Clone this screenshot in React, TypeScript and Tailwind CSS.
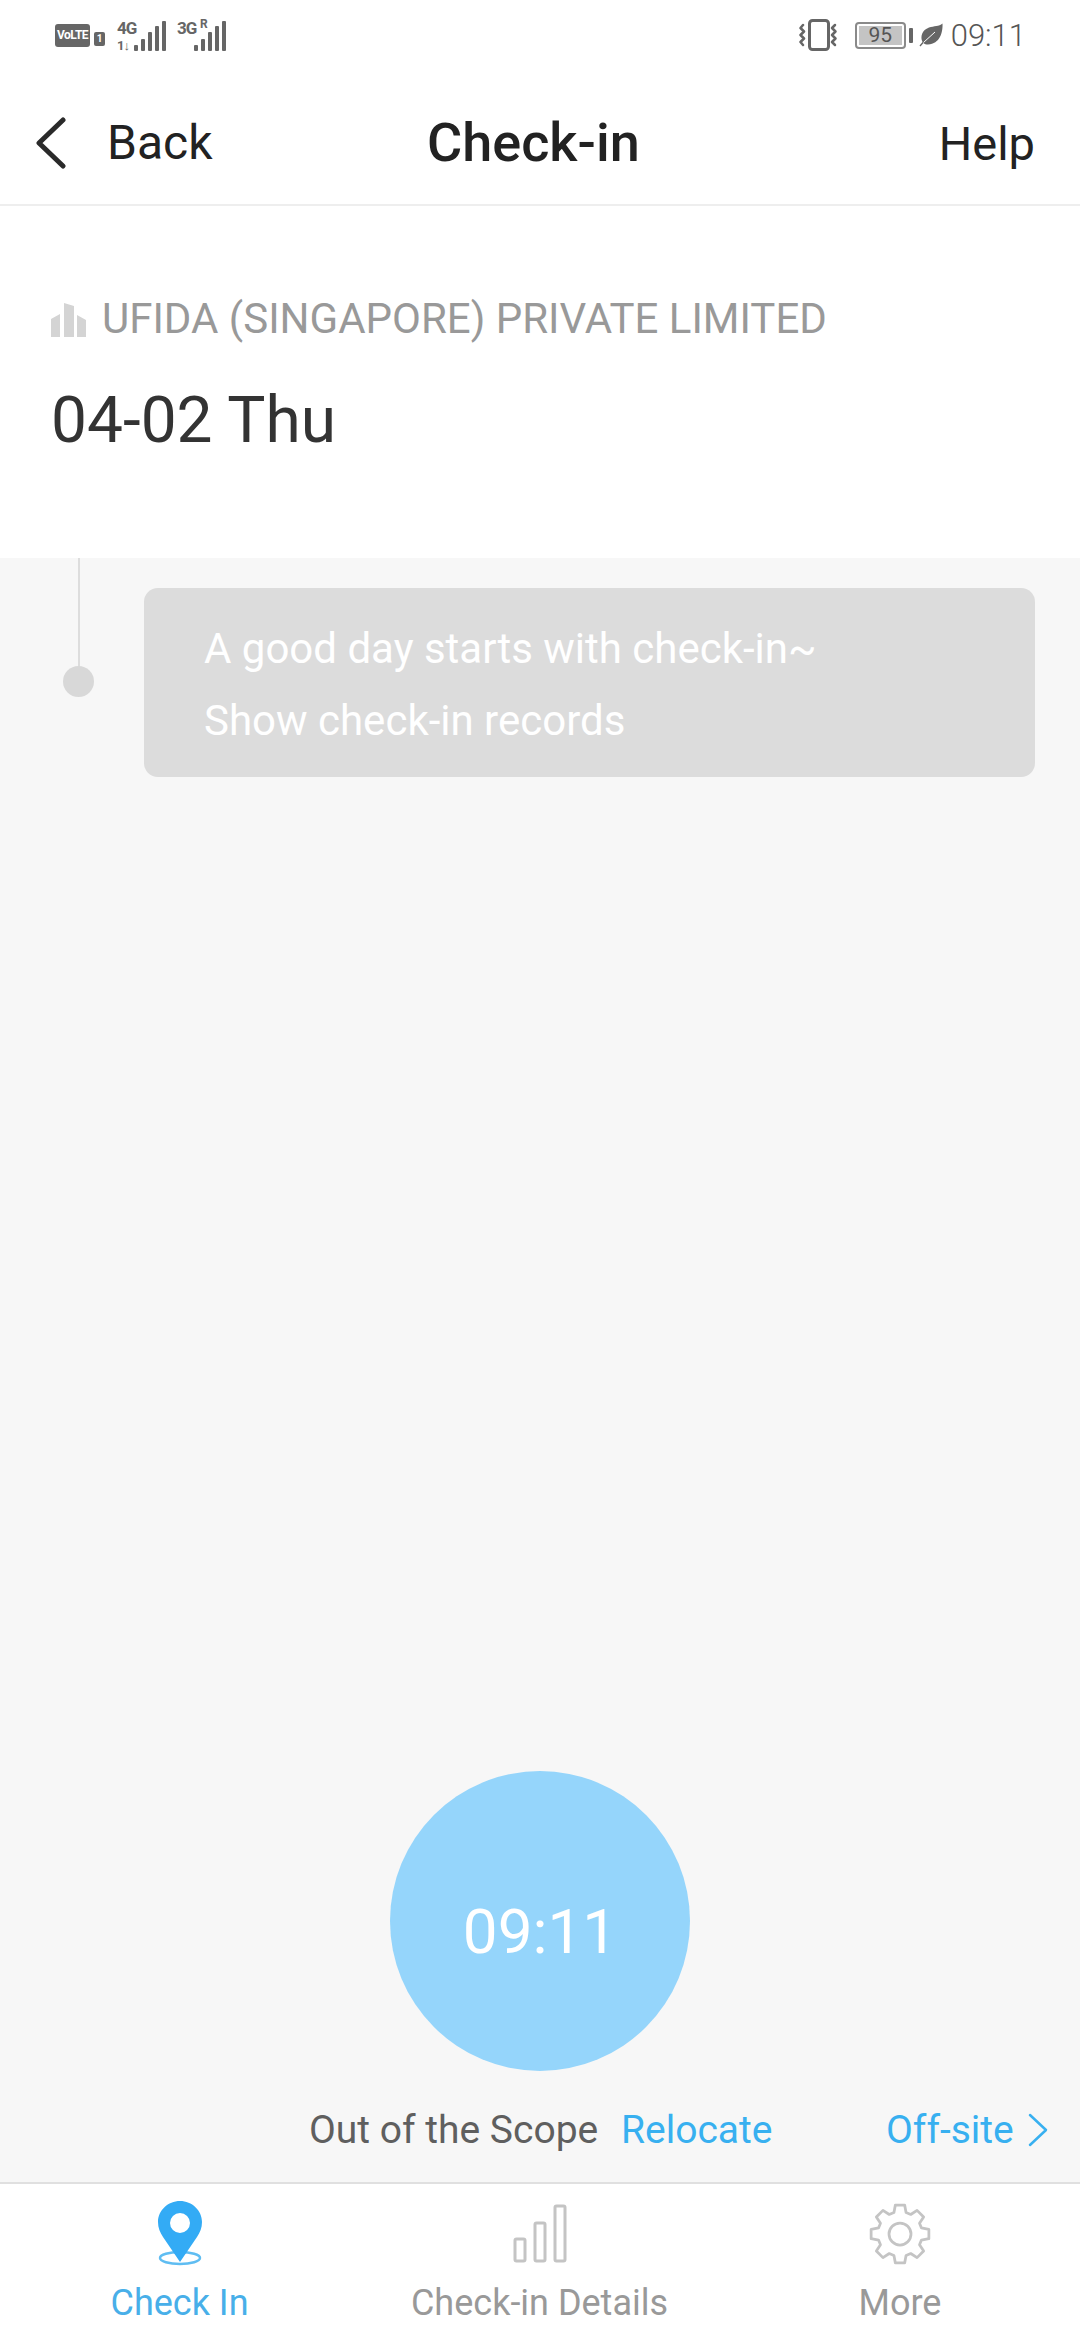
const font = "font-['Roboto',sans-serif]";

function SignalBars({ bars }: { bars: number[] }) {
  return (
    <div className="flex items-end gap-[3px]">
      {bars.map((h, i) => (
        <div key={i} className="w-[4px] rounded-[1px] bg-[#666666]" style={{ height: h }} />
      ))}
    </div>
  );
}

function StatusBar() {
  return (
    <div className="flex h-[70px] items-center justify-between pl-[55px] pr-[54px] text-[#666666]">
      <div className="flex items-center">
        <div className="flex h-[23px] w-[35px] items-center justify-center rounded-[3px] bg-[#666666] text-[12px] font-bold leading-none tracking-[-0.5px] text-white">
          VoLTE
        </div>
        <div className="ml-[4px] mt-[8px] flex h-[14px] w-[11px] items-center justify-center rounded-[2px] bg-[#666666] text-[10px] font-bold leading-none text-white">
          1
        </div>
        <div className="relative ml-[12px] h-[32px] w-[49px]">
          <span className="absolute left-0 top-0 text-[17px] font-bold leading-[18px] tracking-[-1px]">4G</span>
          <span className="absolute bottom-[-1px] left-0 text-[13px] font-bold leading-[12px] tracking-[-1px]">1↓</span>
          <div className="absolute bottom-0 right-0">
            <SignalBars bars={[6, 12, 19, 25, 30]} />
          </div>
        </div>
        <div className="relative ml-[11px] h-[32px] w-[49px]">
          <span className="absolute left-0 top-0 text-[17px] font-bold leading-[18px] tracking-[-1px]">3G</span>
          <span className="absolute left-[23px] top-[-2px] text-[12px] font-bold leading-[14px]">R</span>
          <div className="absolute bottom-0 right-0">
            <SignalBars bars={[6, 12, 19, 25, 30]} />
          </div>
        </div>
      </div>
      <div className="flex items-center">
        <svg width="40" height="32" viewBox="0 0 40 32" fill="none" stroke="#666666" strokeLinecap="round" strokeLinejoin="round">
          <rect x="10.500" y="1.500" width="19" height="29" rx="3" strokeWidth="3" />
          <path d="M4 6l-2.500 3 3.500 3.500-3.500 3.500 3.500 3.500-3.500 3.500 2.500 3" strokeWidth="2.500" />
          <path d="M36 6l-3 3 3.500 3.500-3.500 3.500 3.500 3.500-3.500 3.500 3 3" strokeWidth="2.500" />
        </svg>
        <div className="ml-[16px] flex h-[27px] w-[51px] items-center justify-center rounded-[4px] border-2 border-[#8a8a8a] p-[2px]">
          <div className="flex h-full w-full items-center justify-center bg-[#c4c4c4] text-[21px] leading-none text-[#555555]">95</div>
        </div>
        <div className="ml-[3px] h-[15px] w-[4px] rounded-[1px] bg-[#666666]" />
        <svg className="ml-[6px]" width="24" height="24" viewBox="0 0 24 24">
          <path d="M23.500 0.500C24 9 21 21 9 21.500c-2 0-3.500-.5-4.500-1.500L1.500 23.500 0.500 22.500 3.500 19C1 14 3 7 10 4.500 15 3 20 3.500 23.500 0.500z" fill="#666666" />
          <path d="M4.500 19.500L16 9" stroke="#ffffff" strokeWidth="1" />
        </svg>
        <span className="ml-[8px] text-[31px] font-light leading-none text-[#555555]">09:11</span>
      </div>
    </div>
  );
}

function Header() {
  return (
    <div className="relative flex h-[136px] items-center justify-between border-b-2 border-[#eeeeee] pl-[36px] pr-[45px] pt-[12px] text-[#222222]">
      <div className="flex items-center">
        <svg width="30" height="52" viewBox="0 0 30 52" fill="none" stroke="#2a2a2a" strokeWidth="5" strokeLinecap="round" strokeLinejoin="round">
          <path d="M27 3L3 26l24 23" />
        </svg>
        <span className="ml-[41px] text-[48px] leading-none">Back</span>
      </div>
      <span className="absolute left-[427px] top-[45px] text-[54px] font-medium leading-[56px]">Check-in</span>
      <span className="text-[47px] leading-none">Help</span>
    </div>
  );
}

function Company() {
  return (
    <div className="h-[352px] bg-white pl-[51px] pt-[90px]">
      <div className="flex items-center">
        <svg width="35" height="35" viewBox="0 0 35 35" fill="#d4d4d4">
          <path d="M0 17l9-5v23H0zM13 1l10 3v31H13zM26 13l9 5v17h-9z" />
        </svg>
        <span className="ml-[16px] text-[42px] leading-[46px] text-[#999999]">UFIDA (SINGAPORE) PRIVATE LIMITED</span>
      </div>
      <div className="mt-[42px] text-[64px] leading-[74px] text-[#333333]">04-02 Thu</div>
    </div>
  );
}

function Timeline() {
  return (
    <div className="flex h-[1624px] flex-col bg-[#f7f7f7]">
      <div className="flex flex-1 items-start pr-[45px]">
        <div className="ml-[63px] mr-[50px] flex w-[31px] flex-col items-center self-start">
          <div className="h-[110px] w-[2px] bg-[#dddddd]" />
          <div className="-mt-[2px] h-[31px] w-[31px] shrink-0 rounded-full bg-[#d8d8d8]" />
        </div>
        <div className="mt-[30px] h-[189px] flex-1 rounded-[14px] bg-[#dcdcdc] pl-[60px] pt-[25px] text-[42px] leading-[72px] text-white">
          <div>A good day starts with check-in~</div>
          <div>Show check-in records</div>
        </div>
      </div>
      <div className="flex flex-col items-center">
        <div className="flex h-[300px] w-[300px] items-center justify-center rounded-full bg-[#95d5fb] pt-[22px] text-[62px] leading-none text-white">
          09:11
        </div>
      </div>
      <div className="relative mb-[26px] mt-[33px] h-[52px] text-[39px] leading-[52px]">
        <span className="absolute left-[309px] text-[#5f5f5f]">Out of the Scope</span>
        <span className="absolute left-[621px] text-[#38b0f0]">Relocate</span>
        <div className="absolute left-[886px] flex items-center text-[#38b0f0]">
          <span>Off-site</span>
          <svg className="ml-[14px]" width="20" height="34" viewBox="0 0 20 34" fill="none" stroke="#38b0f0" strokeWidth="2.500" strokeLinecap="round" strokeLinejoin="round">
            <path d="M2 2l16 15L2 32" />
          </svg>
        </div>
      </div>
    </div>
  );
}

function TabBar() {
  return (
    <div className="h-[156px] border-t-2 border-[#e0e0e0] bg-white">
      <div className="grid h-full grid-cols-[359px_361px_360px]">
        <div className="flex flex-col items-center pt-[17px]">
          <svg width="44" height="66" viewBox="0 0 44 66">
            <ellipse cx="22" cy="57" rx="20" ry="6" fill="none" stroke="#5fbdf2" strokeWidth="2.500" />
            <path fillRule="evenodd" d="M22 0C10 0 0 9.500 0 21c0 6 2 10 5 15l17 25 17-25c3-5 5-9 5-15C44 9.500 34 0 22 0zm0 12a10 10 0 1 1 0 20 10 10 0 0 1 0-20z" fill="#33abf5" />
          </svg>
          <span className="mt-[14px] text-[36px] leading-[44px] text-[#48afe9]">Check In</span>
        </div>
        <div className="flex flex-col items-center pt-[17px]">
          <svg width="54" height="66" viewBox="0 0 54 66" fill="none" stroke="#c4c4c4" strokeWidth="3">
            <rect x="2" y="38" width="10" height="22" rx="1.500" />
            <rect x="22" y="22" width="10" height="38" rx="1.500" />
            <rect x="42" y="5" width="10" height="55" rx="1.500" />
          </svg>
          <span className="mt-[14px] text-[36px] leading-[44px] text-[#999999]">Check-in Details</span>
        </div>
        <div className="flex flex-col items-center pt-[17px]">
          <svg width="66" height="66" viewBox="0 0 24 24" fill="none" stroke="#c4c4c4" strokeWidth="1" strokeLinejoin="round">
            <circle cx="12" cy="12" r="4" />
            <path d="M10.300 1.500h3.400l.5 2.700 1.700.7 2.300-1.500 2.400 2.400-1.500 2.300.7 1.700 2.700.5v3.400l-2.700.5-.7 1.700 1.500 2.300-2.400 2.400-2.300-1.500-1.700.7-.5 2.700h-3.400l-.5-2.700-1.700-.7-2.300 1.500-2.400-2.400 1.500-2.300-.7-1.700-2.700-.5v-3.400l2.700-.5.7-1.700-1.500-2.300 2.400-2.400 2.300 1.500 1.700-.7z" />
          </svg>
          <span className="mt-[14px] text-[36px] leading-[44px] text-[#999999]">More</span>
        </div>
      </div>
    </div>
  );
}

export default function App() {
  return (
    <div className={`flex h-[2340px] w-[1080px] flex-col overflow-hidden bg-white ${font}`}>
      <StatusBar />
      <Header />
      <Company />
      <Timeline />
      <TabBar />
    </div>
  );
}
